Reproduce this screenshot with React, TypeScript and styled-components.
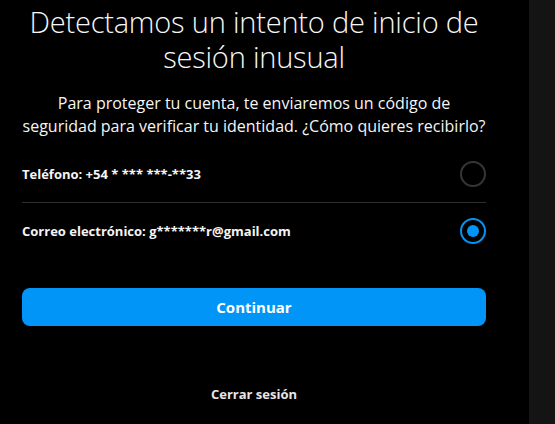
import React, { useState } from "react";
import styled, { createGlobalStyle } from "styled-components";

const Global = createGlobalStyle`
  html, body { margin: 0; padding: 0; background: #000; }
  body { font-family: "Open Sans", "Noto Sans", sans-serif; color: #f5f5f5; }
  * { box-sizing: border-box; }
`;

const Page = styled.div`
  display: flex;
  width: 555px;
  height: 424px;
  overflow: hidden;
`;

const Main = styled.main`
  width: 529px;
  background: #000;
  padding: 0 43px 0 22px;
  display: flex;
  flex-direction: column;
`;

const ScrollTrack = styled.div`
  flex: 1;
  background: #141414;
`;

const Title = styled.h1`
  margin: 4px 0 0;
  font-weight: 300;
  font-size: 29px;
  line-height: 35px;
  text-align: center;
  letter-spacing: -0.2px;
  color: #f7f7f7;
`;

const Lead = styled.p`
  margin: 18px 0 0;
  font-size: 16px;
  line-height: 23px;
  text-align: center;
  color: #f5f5f5;
`;

const Options = styled.div`
  margin-top: 9px;
  display: flex;
  flex-direction: column;
`;

const OptionRow = styled.label<{ $last?: boolean }>`
  display: flex;
  align-items: center;
  justify-content: space-between;
  height: 56px;
  padding-bottom: ${(p) => (p.$last ? "0" : "1px")};
  border-bottom: ${(p) => (p.$last ? "none" : "1px solid #2e2e2e")};
  cursor: pointer;
`;

const OptionText = styled.span`
  font-size: 13px;
  font-weight: 700;
  color: #f5f5f5;
`;

const Radio = styled.span<{ $checked: boolean }>`
  width: 26px;
  height: 26px;
  border-radius: 50%;
  border: 2px solid ${(p) => (p.$checked ? "#0095f6" : "#363636")};
  display: flex;
  align-items: center;
  justify-content: center;
  &::after {
    content: "";
    width: 12px;
    height: 12px;
    border-radius: 50%;
    background: ${(p) => (p.$checked ? "#0095f6" : "transparent")};
  }
`;

const PrimaryButton = styled.button`
  margin-top: 29px;
  height: 38px;
  width: 100%;
  border: none;
  border-radius: 8px;
  background: #0095f6;
  color: #fff;
  font-family: inherit;
  font-size: 15px;
  font-weight: 700;
  cursor: pointer;
`;

const LinkButton = styled.button`
  margin-top: 58px;
  align-self: center;
  background: none;
  border: none;
  color: #e6e6e6;
  font-family: inherit;
  font-size: 13px;
  font-weight: 700;
  cursor: pointer;
`;

export default function App() {
  const [choice, setChoice] = useState("email");
  const options = [
    { id: "phone", label: "Teléfono: +54 * *** ***-**33" },
    { id: "email", label: "Correo electrónico: g*******r@gmail.com" },
  ];
  return (
    <>
      <Global />
      <Page>
        <Main>
          <Title>Detectamos un intento de inicio de sesión inusual</Title>
          <Lead>
            Para proteger tu cuenta, te enviaremos un código de seguridad para
            verificar tu identidad. ¿Cómo quieres recibirlo?
          </Lead>
          <Options>
            {options.map((o, i) => (
              <OptionRow
                key={o.id}
                $last={i === options.length - 1}
                onClick={() => setChoice(o.id)}
              >
                <OptionText>{o.label}</OptionText>
                <Radio $checked={choice === o.id} />
              </OptionRow>
            ))}
          </Options>
          <PrimaryButton>Continuar</PrimaryButton>
          <LinkButton>Cerrar sesión</LinkButton>
        </Main>
        <ScrollTrack />
      </Page>
    </>
  );
}
